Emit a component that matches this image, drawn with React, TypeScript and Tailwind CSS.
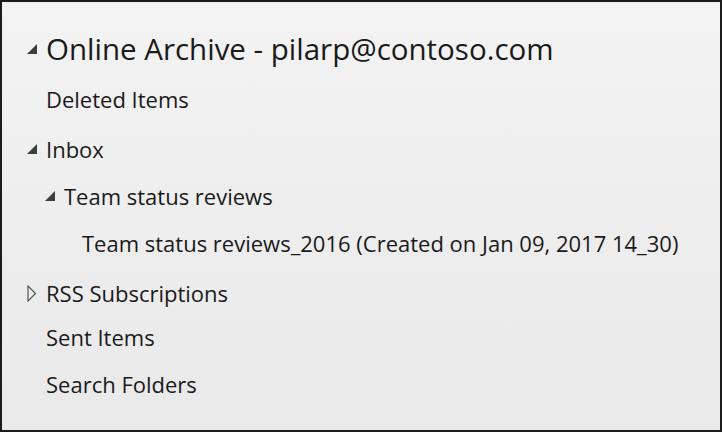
import React from 'react'

type Row = {
  label: string
  indent: number
  icon?: 'open' | 'closed'
  size: string
  h: string
}

const rows: Row[] = [
  { label: 'Online Archive - pilarp@contoso.com', indent: 0, icon: 'open', size: 'text-[29.5px]', h: 'h-[50px]' },
  { label: 'Deleted Items', indent: 0, size: 'text-[22px]', h: 'h-[50px]' },
  { label: 'Inbox', indent: 0, icon: 'open', size: 'text-[22px]', h: 'h-[50px]' },
  { label: 'Team status reviews', indent: 1, icon: 'open', size: 'text-[22px]', h: 'h-[44px]' },
  { label: 'Team status reviews_2016 (Created on Jan 09, 2017 14_30)', indent: 2, size: 'text-[22px]', h: 'h-[50px]' },
  { label: 'RSS Subscriptions', indent: 0, icon: 'closed', size: 'text-[22px]', h: 'h-[50px]' },
  { label: 'Sent Items', indent: 0, size: 'text-[22px]', h: 'h-[38px]' },
  { label: 'Search Folders', indent: 0, size: 'text-[22px]', h: 'h-[56px]' },
]

function Arrow({ kind }: { kind?: 'open' | 'closed' }) {
  if (kind === 'open') {
    return (
      <svg width="10" height="10" viewBox="0 0 10 10" className="shrink-0">
        <polygon points="10,0 10,10 0,10" fill="#3d3d3d" />
      </svg>
    )
  }
  if (kind === 'closed') {
    return (
      <svg width="10" height="17" viewBox="0 0 10 17" className="shrink-0">
        <polygon points="1,1 1,16 8.5,8.5" fill="none" stroke="#555" strokeWidth="1.2" />
      </svg>
    )
  }
  return <span className="w-[10px] shrink-0" />
}

export default function App() {
  return (
    <div className="w-[722px] h-[432px] border-2 border-[#1c1c1c] bg-gradient-to-b from-[#f3f3f3] to-[#e9e9e9] text-[#1a1a1a] font-['Open_Sans',sans-serif] pt-[22px]">
      {rows.map(r => (
        <div
          key={r.label}
          className={`flex items-center gap-[9px] ${r.h}`}
          style={{ paddingLeft: 25 + r.indent * 18 }}
        >
          <Arrow kind={r.icon} />
          <span className={`${r.size} leading-none whitespace-nowrap`}>{r.label}</span>
        </div>
      ))}
    </div>
  )
}
